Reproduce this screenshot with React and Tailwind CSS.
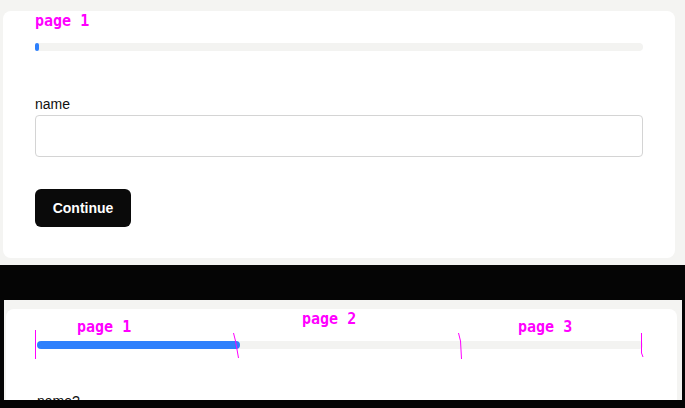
const sans = { fontFamily: '"Liberation Sans", Arial, sans-serif' };

function Note({ children, className }) {
  return (
    <span
      className={`absolute text-[15px] leading-[15px] font-bold text-[#ff00ff] whitespace-pre ${className}`}
      style={{ fontFamily: '"DejaVu Sans Mono", monospace' }}
    >
      {children}
    </span>
  );
}

function Track({ fill }) {
  return (
    <div className="h-2 w-full rounded-full bg-[#f3f3f1]">
      <div className="h-2 rounded-full bg-[#2e80fc]" style={{ width: fill }} />
    </div>
  );
}

export default function App() {
  return (
    <div className="relative flex flex-col w-[685px] h-[408px] overflow-hidden bg-[#050505]" style={sans}>
      {/* first capture */}
      <div className="flex h-[265px] bg-[#f4f4f2] pt-[11px] pl-[3px] pr-[10px] pb-[7px]">
        <div className="flex flex-1 flex-col items-start rounded-lg bg-white px-8 pt-8">
          <Track fill="4px" />
          <label className="mt-[43px] text-sm leading-[21px] text-[#111]">name</label>
          <input className="w-full h-[42px] rounded border border-[#d4d4d4] bg-white" />
          <button className="mt-8 h-[38px] w-[96px] rounded-md bg-[#0a0a0a] text-sm font-bold text-white">
            Continue
          </button>
        </div>
      </div>

      {/* second capture */}
      <div className="mt-[35px] ml-[4px] mr-[3px] h-[100px] overflow-hidden bg-[#f4f4f2] pt-[9px] pl-[2px] pr-[5px]">
        <div className="flex h-[120px] flex-col rounded-lg bg-white pl-[31px] pr-[34px] pt-8">
          <Track fill="203px" />
          <label className="mt-[42px] text-sm leading-[21px] text-[#111]">name?</label>
        </div>
      </div>

      {/* annotations */}
      <Note className="left-[35px] top-[14px]">page 1</Note>
      <Note className="left-[77px] top-[320px]">page 1</Note>
      <Note className="left-[302px] top-[312px]">page 2</Note>
      <Note className="left-[518px] top-[320px]">page 3</Note>
      <svg className="absolute left-0 top-0" width="685" height="408" fill="none" stroke="#ff00ff" strokeWidth="1">
        <path d="M35.5 330v29" />
        <path d="M233.5 333l2 8 3 17" />
        <path d="M458.5 333l2 8 1 18" />
        <path d="M641.5 333v20l1.5 4" />
      </svg>
    </div>
  );
}
